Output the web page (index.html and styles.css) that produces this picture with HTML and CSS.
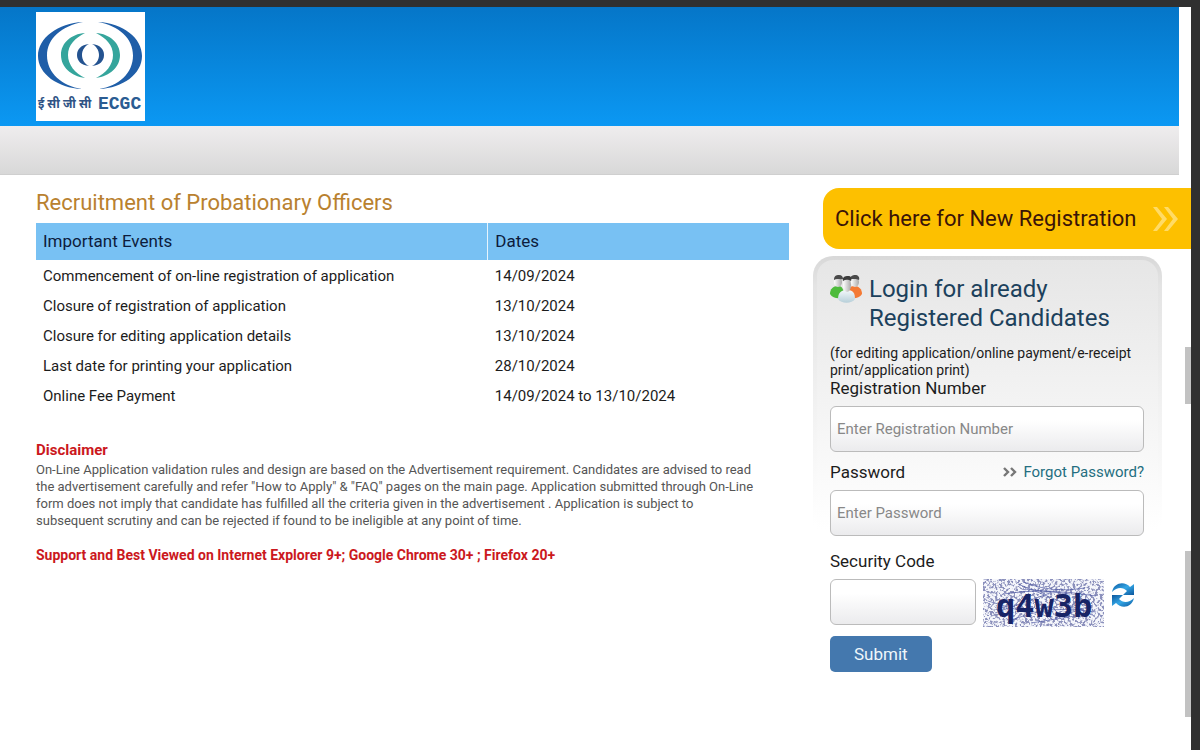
FILE: index.html
```
<!DOCTYPE html>
<html lang="en">
<head>
<meta charset="utf-8">
<meta name="viewport" content="width=device-width, initial-scale=1">
<title>Recruitment of Probationary Officers</title>
<link rel="stylesheet" href="styles.css">
</head>
<body>
<header class="site-header">
  <div class="banner">
    <svg class="logo" viewBox="0 0 109 109" role="img" aria-label="ECGC">
      <rect width="109" height="109" fill="#fff"/>
      <g fill="#1f5ea8">
        <path d="M47 10C22 11 2 26 2 44s20 32 44 33C26 74 11 61 11 43.500S26 14 47 10z"/>
        <path d="M62 10c25 1 44 16 44 34S87 76 63 77c20-3 34-16 34-33.500S83 14 62 10z"/>
      </g>
      <g fill="#35a59c">
        <path d="M49 21C35 22 25 31 25 43s10 21 24 23c-10-5-17-13-17-23s7-17 17-22z"/>
        <path d="M60 21c14 1 24 10 24 22S74 64 60 66c10-5 17-13 17-23s-7-17-17-22z"/>
      </g>
      <g fill="#245390">
        <path d="M53 32c-8 1-12 5-12 11s4 10 12 11c-4-2-7-6-7-11s3-9 7-11z"/>
        <path d="M56 32c8 1 12 5 12 11s-4 10-12 11c4-2 7-6 7-11s-3-9-7-11z"/>
      </g>
      <text class="logo-hindi" x="2" y="96">ई सी जी सी</text>
      <text class="logo-latin" x="62" y="97">ECGC</text>
    </svg>
  </div>
  <div class="subbar"></div>
</header>

<main class="content">
  <section class="info">
    <h1 class="title">Recruitment of Probationary Officers</h1>
    <table class="events">
      <thead>
        <tr><th scope="col" class="event-col">Important Events</th><th scope="col">Dates</th></tr>
      </thead>
      <tbody>
        <tr><td>Commencement of on-line registration of application</td><td>14/09/2024</td></tr>
        <tr><td>Closure of registration of application</td><td>13/10/2024</td></tr>
        <tr><td>Closure for editing application details</td><td>13/10/2024</td></tr>
        <tr><td>Last date for printing your application</td><td>28/10/2024</td></tr>
        <tr><td>Online Fee Payment</td><td>14/09/2024 to 13/10/2024</td></tr>
      </tbody>
    </table>
    <h2 class="disclaimer-title">Disclaimer</h2>
    <p class="disclaimer">On-Line Application validation rules and design are based on the Advertisement requirement. Candidates are advised to read the advertisement carefully and refer "How to Apply" &amp; "FAQ" pages on the main page. Application submitted through On-Line form does not imply that candidate has fulfilled all the criteria given in the advertisement . Application is subject to subsequent scrutiny and can be rejected if found to be ineligible at any point of time.</p>
    <p class="support">Support and Best Viewed on Internet Explorer 9+; Google Chrome 30+ ; Firefox 20+</p>
  </section>

  <aside class="side">
    <a class="register" href="#">
      <span>Click here for New Registration</span>
      <svg class="register-icon" viewBox="0 0 26 26" aria-hidden="true">
        <path d="M1 1h4l10 12L5 25H1l9-12zM12 1h4l10 12-10 12h-4l9-12z" fill="#ffdb66"/>
      </svg>
    </a>
    <form class="login">
      <div class="login-head">
        <svg class="people" viewBox="0 0 32 29" aria-hidden="true">
          <defs>
            <linearGradient id="face" x2="1"><stop stop-color="#fff"/><stop offset="1" stop-color="#a9a9a9"/></linearGradient>
            <linearGradient id="shirt" x2="0" y2="1"><stop stop-color="#f4f9fb"/><stop offset="1" stop-color="#b7cfd9"/></linearGradient>
          </defs>
          <path d="M0 19c0-5 3-8 8-8 4 0 6 3 6 11-4 2-11 2-14-3z" fill="#4dbb3c"/>
          <path d="M32 19c0-5-3-8-8-8-4 0-6 3-6 11 4 2 11 2 14-3z" fill="#f47a35"/>
          <ellipse cx="8" cy="7" rx="4" ry="5" fill="url(#face)"/>
          <ellipse cx="25" cy="7" rx="4" ry="5" fill="url(#face)"/>
          <path d="M4 5C4 1 6 0 9 0s4 2 4 4c-3 1-6-1-9 1zM20 4c0-3 3-4 5-4 3 0 5 2 4 5-1-1-5-1-9-1z" fill="#4a4a4a"/>
          <path d="M8 24c0-6 3-9 9-9s8 3 8 9c-3 5-14 5-17 0z" fill="url(#shirt)"/>
          <ellipse cx="17" cy="10" rx="4" ry="7" fill="url(#face)"/>
          <path d="M13 6c-1-4 2-5 5-5s4 2 3 5c-2-1-5-2-8 0z" fill="#3c3c3c"/>
        </svg>
        <h2 class="login-title">Login for already Registered Candidates</h2>
      </div>
      <p class="hint">(for editing application/online payment/e-receipt print/application print)</p>
      <label class="label" for="regno">Registration Number</label>
      <input class="field" id="regno" type="text" placeholder="Enter Registration Number">
      <div class="label-row">
        <label class="label" for="password">Password</label>
        <a class="forgot" href="#">
          <svg class="forgot-icon" viewBox="0 0 14 10" aria-hidden="true"><path d="M1 1l4 4-4 4M8 1l4 4-4 4" fill="none" stroke="#777" stroke-width="2.4"/></svg>
          <span>Forgot Password?</span>
        </a>
      </div>
      <input class="field" id="password" type="password" placeholder="Enter Password">
      <label class="label label-code" for="code">Security Code</label>
      <div class="code-row">
        <input class="field field-code" id="code" type="text">
        <svg class="captcha" viewBox="0 0 121 48" role="img" aria-label="Security code">
          <defs>
            <filter id="grain" x="0" y="0" width="1" height="1">
              <feTurbulence type="fractalNoise" baseFrequency="0.4" numOctaves="2" seed="7"/>
              <feColorMatrix values="0 0 0 0 0.26  0 0 0 0 0.28  0 0 0 0 0.5  7 0 0 0 -3.3"/>
            </filter>
          </defs>
          <rect width="121" height="48" fill="#f5f6fb"/>
          <rect width="121" height="48" filter="url(#grain)"/>
          <g fill="none" stroke="#4652a0" stroke-opacity=".65">
            <path d="M20 15Q60 8 113 17M35 5l75 31M12 34l55-20M25 42q45-18 88-9M42 10l45 5M72 39l38-13M5 22l40 12M40 3q30 12 62 6M48 44l50-8"/>
          </g>
          <text class="captcha-text" x="13" y="38">q4w3b</text>
        </svg>
        <button class="refresh" type="button" aria-label="Refresh security code">
          <svg viewBox="0 0 24 24" aria-hidden="true">
            <defs><linearGradient id="arrow" x2="1" y2="1"><stop stop-color="#0b559c"/><stop offset=".5" stop-color="#34a7e6"/><stop offset="1" stop-color="#0b559c"/></linearGradient></defs>
            <path d="M1 9C3-1 14-2 19 4l4-3v11H12l4-4C12 4 6 4 1 9z" fill="url(#arrow)"/>
            <path d="M23 15c-2 10-13 11-18 5l-4 3V12h11l-4 4c4 4 10 4 15-1z" fill="url(#arrow)"/>
          </svg>
        </button>
      </div>
      <button class="submit" type="submit">Submit</button>
    </form>
  </aside>
</main>
<div class="thumb thumb-upper"></div>
<div class="thumb thumb-lower"></div>
</body>
</html>
```

FILE: styles.css
```
* { box-sizing: border-box; }

body {
  margin: 0;
  min-height: 100vh;
  border-top: 7px solid #303030;
  border-right: 9px solid #303030;
  background: #fff;
  color: #1c1c1c;
  font-family: Roboto, "Liberation Sans", sans-serif;
  font-size: 15px;
}

h1, h2, p { margin: 0; font-weight: 400; }
a { text-decoration: none; }

.site-header { margin-right: 12px; }

.banner {
  padding: 5px 36px;
  background: linear-gradient(#0576c8, #0b98f3);
}

.logo { display: block; width: 109px; height: 109px; }
.logo-hindi { font: 700 12px "Noto Sans", "Noto Sans Devanagari", sans-serif; fill: #2f5385; }
.logo-latin { font: 700 18px "Liberation Mono", monospace; fill: #2b5c92; }

.subbar {
  height: 49px;
  background: linear-gradient(#efedee, #d8d8d8);
  border-bottom: 1px solid #cfcfcf;
}

.content { display: flex; align-items: flex-start; }

.info { flex: 1; padding: 13px 24px 0 36px; }

.title { font-size: 22px; line-height: 30px; color: #b9812f; }

.events {
  width: 100%;
  margin-top: 5px;
  border-collapse: collapse;
  table-layout: fixed;
}
.events th {
  height: 37px;
  padding: 0 7px 2px;
  background: #78c1f3;
  color: #0d1c3c;
  font-size: 17px;
  font-weight: 400;
  text-align: left;
}
.events th + th { border-left: 1px solid #e6f4fd; }
.event-col { width: 60%; }
.events td { height: 30px; padding: 1px 7px 0; }

.disclaimer-title {
  margin-top: 31px;
  color: #cb1820;
  font-size: 15px;
  font-weight: 700;
  line-height: 18px;
}
.disclaimer {
  margin-top: 2px;
  padding-right: 29px;
  color: #555;
  font-size: 13px;
  line-height: 17px;
}
.support {
  margin-top: 18px;
  color: #cb1820;
  font-size: 14px;
  font-weight: 700;
  line-height: 17px;
}

.side { width: 378px; padding-top: 13px; }

.register {
  display: flex;
  align-items: center;
  justify-content: space-between;
  height: 61px;
  margin-left: 10px;
  padding: 0 13px 1px 12px;
  border-radius: 16px 0 0 16px;
  background: #fdc000;
  color: #3a1408;
  font-size: 22px;
}
.register-icon { width: 26px; height: 26px; margin-top: 2px; }

.login {
  margin: 7px 29px 0 0;
  padding: 15px 14px 0 13px;
  border: 4px solid transparent;
  border-radius: 20px 20px 0 0;
  background:
    linear-gradient(#e6e6e6, #fff 270px) padding-box,
    linear-gradient(#d8d8d8, #e4e4e4 30px, #fff 270px) border-box;
}

.login-head { display: flex; gap: 7px; }
.people { flex: none; width: 32px; height: 29px; }
.login-title { color: #1c415c; font-size: 24px; line-height: 29px; }

.hint { margin-top: 12px; font-size: 14px; line-height: 17px; }
.label { display: block; font-size: 17px; line-height: 18px; }

.field {
  display: block;
  width: 100%;
  height: 46px;
  margin: 9px 0 10px;
  padding: 0 6px;
  border: 1px solid #bbb;
  border-radius: 6px;
  background: linear-gradient(#fff, #fff 30%, #ebebed);
  color: #222;
  font: inherit;
}
.field::placeholder { color: #888; opacity: 1; }

.label-row { display: flex; align-items: center; justify-content: space-between; height: 19px; }
.forgot { display: flex; align-items: center; gap: 6px; color: #246e80; font-size: 15px; }
.forgot-icon { width: 14px; height: 10px; }
.label-code { margin-top: 16px; }

.code-row { display: flex; align-items: flex-start; gap: 7px; }
.field-code { width: 146px; margin-bottom: 11px; }
.captcha { flex: none; width: 121px; height: 48px; margin-top: 9px; }
.captcha-text { font: 700 32px "DejaVu Sans Mono", monospace; fill: #172466; }
.refresh {
  width: 24px;
  height: 24px;
  margin-top: 13px;
  padding: 0;
  border: 0;
  background: none;
}
.refresh svg { display: block; }

.submit {
  padding: 0 24px;
  height: 36px;
  border: 0;
  border-radius: 5px;
  background: #4478ae;
  color: #eef6fb;
  font: 17px Roboto, sans-serif;
}

/* scroll indicators over the right edge */
.thumb { position: absolute; right: 9px; width: 6px; background: #c2c2c2; }
.thumb-upper { top: 347px; height: 57px; }
.thumb-lower { top: 551px; height: 166px; }
```
